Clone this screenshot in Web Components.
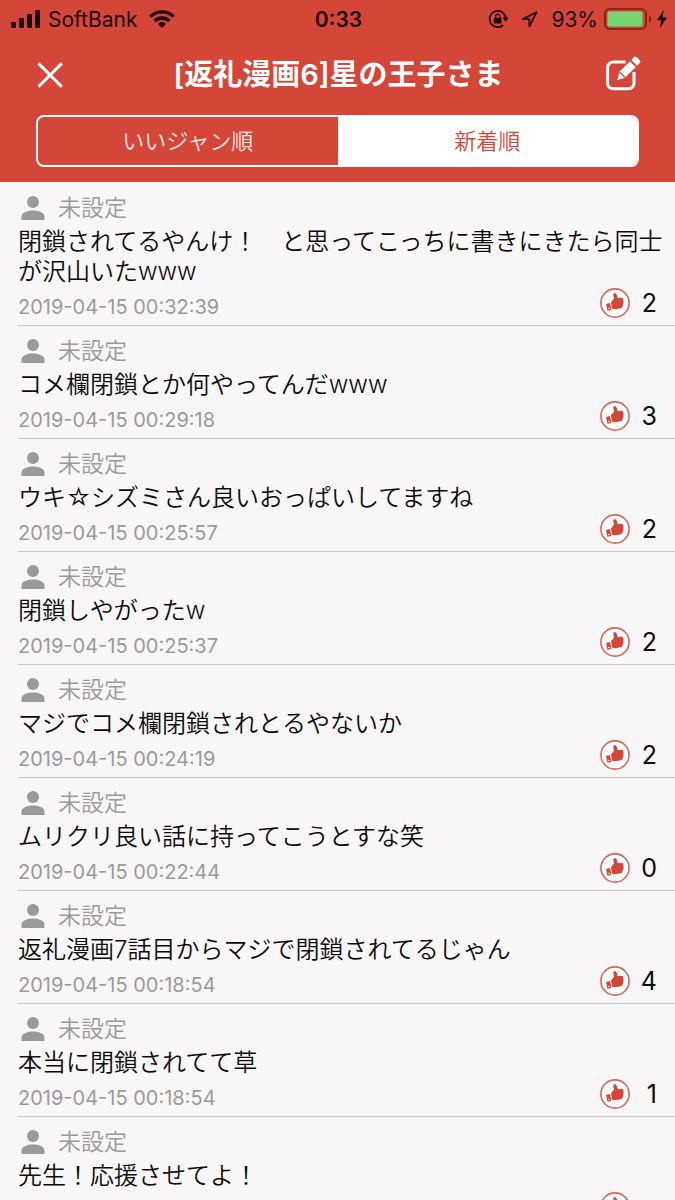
<!DOCTYPE html>
<html lang="ja">
<head>
<meta charset="utf-8">
<meta name="viewport" content="width=device-width, initial-scale=1">
<title>[返礼漫画6]星の王子さま</title>
<style>
  html, body { height: 100%; }
  body {
    margin: 0;
    --red: #d34638;
    --paper: #f8f6f7;
    --grey: #9b9a9b;
    --line: #c8c6c8;
    background: var(--paper);
    color: #0c0c0c;
    font-family: Inter, "Noto Sans CJK JP", sans-serif;
  }
</style>
</head>
<body>
<comment-screen>
  <status-bar slot="status" carrier="SoftBank" time="0:33" battery="93"></status-bar>
  <nav-bar slot="nav">[返礼漫画6]星の王子さま</nav-bar>
  <sort-tabs slot="tabs"></sort-tabs>
  <comment-item date="2019-04-15 00:32:39" likes="2">閉鎖されてるやんけ！　と思ってこっちに書きにきたら同士が沢山いたwww</comment-item>
  <comment-item date="2019-04-15 00:29:18" likes="3">コメ欄閉鎖とか何やってんだwww</comment-item>
  <comment-item date="2019-04-15 00:25:57" likes="2">ウキ☆シズミさん良いおっぱいしてますね</comment-item>
  <comment-item date="2019-04-15 00:25:37" likes="2">閉鎖しやがったw</comment-item>
  <comment-item date="2019-04-15 00:24:19" likes="2">マジでコメ欄閉鎖されとるやないか</comment-item>
  <comment-item date="2019-04-15 00:22:44" likes="0">ムリクリ良い話に持ってこうとすな笑</comment-item>
  <comment-item date="2019-04-15 00:18:54" likes="4">返礼漫画7話目からマジで閉鎖されてるじゃん</comment-item>
  <comment-item date="2019-04-15 00:18:54" likes="1">本当に閉鎖されてて草</comment-item>
  <comment-item>先生！応援させてよ！</comment-item>
</comment-screen>

<script>
  class BaseElement extends HTMLElement {
    constructor() {
      super();
      this.attachShadow({ mode: 'open' });
    }
    connectedCallback() {
      this.shadowRoot.innerHTML = this.render();
    }
    attr(name) {
      return this.getAttribute(name) || '';
    }
  }

  customElements.define('comment-screen', class extends BaseElement {
    render() {
      return `
        <style>
          :host { display: flex; flex-direction: column; height: 100vh; }
          header { flex: none; background: var(--red); padding-bottom: 15px; }
          main { flex: 1; min-height: 0; overflow-y: auto; scrollbar-width: none; padding-top: 1px; }
        </style>
        <header>
          <slot name="status"></slot>
          <slot name="nav"></slot>
          <slot name="tabs"></slot>
        </header>
        <main><slot></slot></main>`;
    }
  });

  customElements.define('status-bar', class extends BaseElement {
    render() {
      return `
        <style>
          :host {
            display: grid; grid-template-columns: 1fr auto 1fr; align-items: center;
            height: 38px; padding: 0 8px 0 10px; color: #1c0604; font-size: 21px;
          }
          .side { display: flex; align-items: center; }
          .right { justify-content: flex-end; }
          .carrier { margin: 0 12px 0 7px; }
          .time { font-weight: 600; }
          .lock { margin-right: 12px; }
          .arrow { margin-right: 13px; }
          .battery { margin: 0 5px 0 6px; }
          svg { display: block; flex: none; }
        </style>
        <div class="side">
          <svg width="31" height="18" viewBox="0 0 31 18" fill="currentColor" aria-hidden="true">
            <rect x="1" y="12" width="5" height="6" rx="1"/><rect x="9" y="8" width="5" height="10" rx="1"/>
            <rect x="17" y="4" width="5" height="14" rx="1"/><rect x="25" y="0" width="5" height="18" rx="1"/>
          </svg>
          <span class="carrier">${this.attr('carrier')}</span>
          <svg width="26" height="18" viewBox="0 0 26 18" aria-hidden="true">
            <g fill="none" stroke="currentColor" stroke-width="3.4">
              <path d="M1.4 6.6a16.5 16.5 0 0 1 23.2 0"/><path d="M5.6 11a10.6 10.6 0 0 1 14.8 0"/>
            </g>
            <path d="M13 18l-4.2-4.3a6.2 6.2 0 0 1 8.4 0z" fill="currentColor"/>
          </svg>
        </div>
        <span class="time">${this.attr('time')}</span>
        <div class="side right">
          <svg class="lock" width="21" height="20" viewBox="0 0 21 20" aria-hidden="true">
            <path d="M17.8 9.2A8.1 8.1 0 1 0 15.2 16" fill="none" stroke="currentColor" stroke-width="1.7"/>
            <path d="M14.6 8.6h6.2l-3.1 4.1z" fill="currentColor"/>
            <rect x="6" y="9" width="7.4" height="5.6" rx=".8" fill="currentColor"/>
            <path d="M7.6 9.2V7.4a2.1 2.1 0 0 1 4.2 0v1.8" fill="none" stroke="currentColor" stroke-width="1.4"/>
          </svg>
          <svg class="arrow" width="17" height="17" viewBox="0 0 17 17" aria-hidden="true">
            <path d="M15.6 1.2L1.6 8h6.8v7.4z" fill="none" stroke="currentColor" stroke-width="1.7" stroke-linejoin="round"/>
          </svg>
          <span>${this.attr('battery')}%</span>
          <svg class="battery" width="48" height="22" viewBox="0 0 48 22" aria-hidden="true">
            <rect x="1" y="1" width="41" height="20" rx="5" fill="none" stroke="#8a2218" stroke-width="2"/>
            <rect x="3.5" y="3.5" width="35" height="15" rx="2" fill="#76d672"/>
            <path d="M45 7.5c3 1 3 6 0 7z" fill="#8a2218"/>
          </svg>
          <svg width="10" height="18" viewBox="0 0 10 18" aria-hidden="true">
            <path d="M6.6 0L0 10.2h4.2L3 18l7-10.6H5.6z" fill="currentColor"/>
          </svg>
        </div>`;
    }
  });

  customElements.define('nav-bar', class extends BaseElement {
    render() {
      return `
        <style>
          :host {
            display: grid; grid-template-columns: 36px 1fr 36px; align-items: center;
            height: 74px; padding: 0 34px 3px 36px; color: #fff;
          }
          h1 { margin: 0; text-align: center; font-size: 29px; line-height: 40px; font-weight: 600; }
          button { display: block; padding: 0; border: 0; background: none; color: inherit; }
          svg { display: block; }
        </style>
        <button type="button" aria-label="閉じる">
          <svg width="28" height="28" viewBox="0 0 28 28" fill="none" stroke="currentColor" stroke-width="3">
            <path d="M2.4 2.4l23.4 23.4M25.8 2.4L2.4 25.8"/>
          </svg>
        </button>
        <h1><slot></slot></h1>
        <button type="button" aria-label="コメントを書く">
          <svg width="36" height="40" viewBox="0 0 36 40">
            <path d="M20.500 7H8.200a5.600 5.600 0 0 0-5.600 5.600V28.200a5.600 5.600 0 0 0 5.600 5.600H23.400a5.600 5.600 0 0 0 5.600-5.600V17" fill="none" stroke="currentColor" stroke-width="3"/>
            <path d="M12.200 25.200l2.200-8.400L25.200 6l5.800 5.800L20.200 22.600z" fill="currentColor"/>
            <path d="M26.200 5l2.700-2.700a2 2 0 0 1 2.800 0l3 3a2 2 0 0 1 0 2.800L32 10.800z" fill="currentColor"/>
            <path d="M25.300 5.900l5.800 5.800M14.600 17l5.400 5.400" fill="none" stroke="var(--red)" stroke-width="1.200"/>
          </svg>
        </button>`;
    }
  });

  customElements.define('sort-tabs', class extends BaseElement {
    render() {
      return `
        <style>
          :host { display: block; padding: 0 36px; }
          div {
            display: grid; grid-template-columns: 1fr 1fr; height: 52px; box-sizing: border-box;
            border: 2px solid #fff; border-radius: 8px; overflow: hidden;
          }
          button {
            padding: 0 0 4px; border: 0; background: none; color: #fbe9e3;
            font: inherit; font-size: 22px; font-weight: 350;
          }
          button[aria-pressed="true"] { background: #fff; color: var(--red); }
        </style>
        <div role="group" aria-label="並び順">
          <button type="button" aria-pressed="false">いいジャン順</button>
          <button type="button" aria-pressed="true">新着順</button>
        </div>`;
    }
    connectedCallback() {
      super.connectedCallback();
      const buttons = this.shadowRoot.querySelectorAll('button');
      buttons.forEach(b => b.addEventListener('click', () => {
        buttons.forEach(o => o.setAttribute('aria-pressed', String(o === b)));
      }));
    }
  });

  customElements.define('comment-item', class extends BaseElement {
    render() {
      return `
        <style>
          :host { display: block; padding-left: 18px; }
          article { padding: 10px 8px 7px 0; border-bottom: 1px solid var(--line); }
          .user {
            display: flex; align-items: center; gap: 13px; height: 30px; padding-left: 3px;
            margin-bottom: 4px; color: var(--grey); font-size: 23px; line-height: 30px; font-weight: 350;
          }
          p { margin: 0 0 1px; font-size: 24px; line-height: 30px; font-weight: 350; }
          footer {
            display: flex; justify-content: space-between; align-items: flex-end;
            height: 30px; padding-right: 10px;
          }
          time { color: var(--grey); font-size: 20px; line-height: 22px; }
          button {
            display: flex; align-items: center; gap: 11px; height: 30px; padding: 0;
            border: 0; background: none; color: inherit; font: inherit; font-size: 25px;
          }
          .count { min-width: 16px; text-align: right; }
          svg { display: block; flex: none; }
        </style>
        <article>
          <div class="user">
            <svg width="24" height="24" viewBox="0 0 24 24" fill="currentColor" aria-hidden="true">
              <circle cx="12" cy="6" r="6"/>
              <path d="M0.500 24v-3.500C0.500 16.500 7 14.600 12 14.600s11.500 1.900 11.500 5.900V24z"/>
            </svg>
            <span>未設定</span>
          </div>
          <p><slot></slot></p>
          <footer>
            <time>${this.attr('date')}</time>
            <button type="button" aria-label="いいジャン ${this.attr('likes')}">
              <svg width="30" height="30" viewBox="0 0 30 30" aria-hidden="true">
                <circle cx="15" cy="15" r="14.100" fill="#fff" stroke="#d9655a" stroke-width="1.600"/>
                <path d="M11 14.200l3-3.400-.8-4.300c0-1.600 2.800-1.700 3.300-.2l1.300 4 3.800-.5c1.500 0 2 1.200 1.400 2 .9.500.9 1.700.2 2.300.7.600.6 1.800-.2 2.200.5.800.1 1.900-.8 2.100.2.900-.4 1.700-1.200 1.900l-6 .9c-1.400.1-2.200-.4-3.100-1z" fill="#d34638"/>
                <path d="M6 15.900l4-.9 1.500 6.900-4 .9z" fill="#d34638"/>
                <circle cx="9" cy="20.500" r=".8" fill="#fff"/>
              </svg>
              <span class="count">${this.attr('likes')}</span>
            </button>
          </footer>
        </article>`;
    }
  });
</script>
</body>
</html>
